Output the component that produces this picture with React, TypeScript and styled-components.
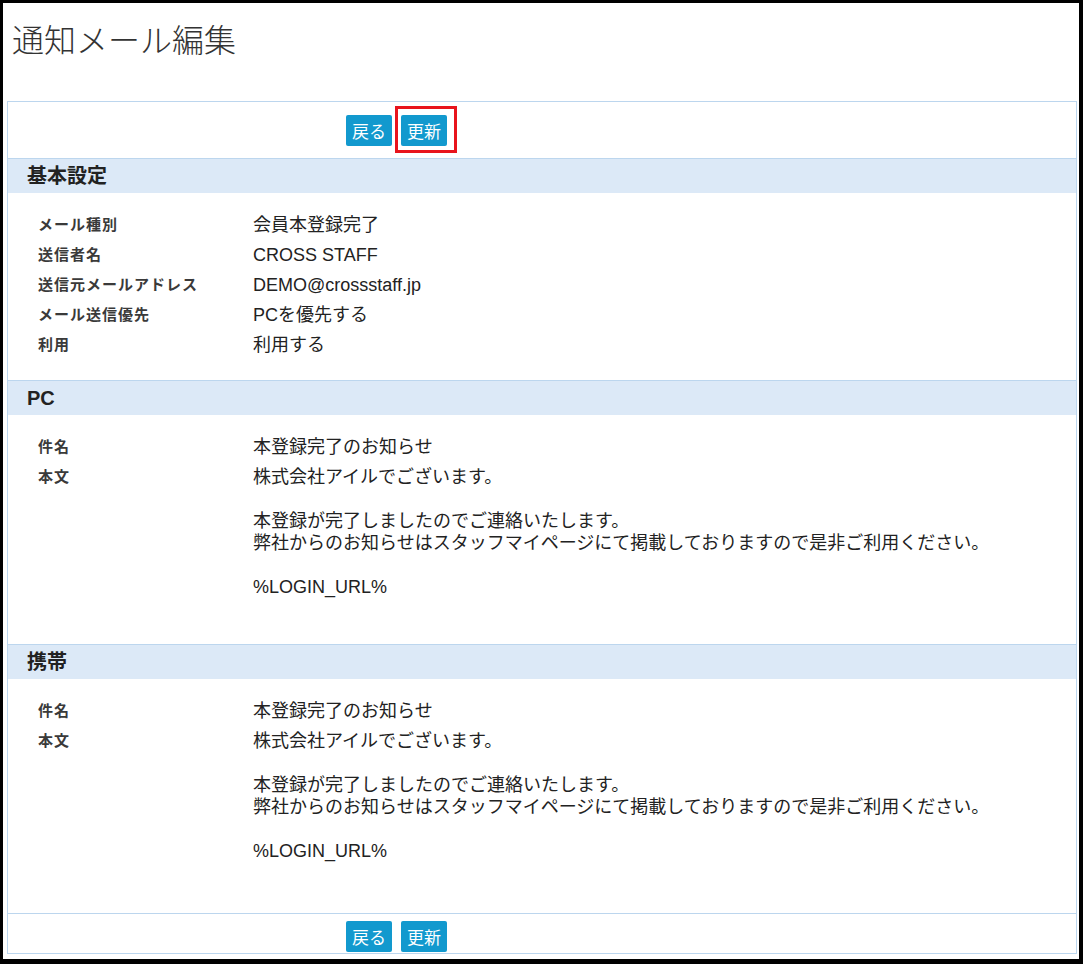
import React from 'react'
import styled, { createGlobalStyle } from 'styled-components'

const GlobalStyle = createGlobalStyle`
  html, body {
    margin: 0;
    padding: 0;
    background: #fff;
  }
  body {
    font-family: "Liberation Sans", "Noto Sans CJK JP", sans-serif;
    color: #222;
  }
`

const Frame = styled.div`
  box-sizing: border-box;
  width: 1083px;
  height: 964px;
  border-style: solid;
  border-color: #000;
  border-width: 3px 4px 5px 3px;
  padding: 0 2px 5px 4px;
  display: flex;
  flex-direction: column;
  background: #fff;
`

const Title = styled.h1`
  margin: 0 0 43px;
  padding: 15px 0 0 5px;
  font-size: 32px;
  line-height: 40px;
  font-weight: 300;
  color: #333;
  font-family: "Noto Sans CJK JP", sans-serif;
`

const Panel = styled.div`
  flex: 1;
  display: flex;
  flex-direction: column;
  border: 1px solid #bcd6ee;
`

const ButtonBar = styled.div<{ $top?: boolean }>`
  display: flex;
  gap: 9px;
  padding: ${p => (p.$top ? '13px 0 12px 338px' : '7px 0 1px 338px')};
  border-top: ${p => (p.$top ? 'none' : '1px solid #bcd6ee')};
`

const Button = styled.button<{ $marked?: boolean }>`
  position: relative;
  height: 31px;
  padding: 0 6px;
  border: none;
  border-radius: 2px;
  background: #1299ce;
  color: #fff;
  font-family: "Noto Sans CJK JP", sans-serif;
  font-size: 17px;
  line-height: 31px;
  cursor: pointer;

  ${p =>
    p.$marked &&
    `
    &::after {
      content: '';
      position: absolute;
      top: -9px;
      left: -6px;
      right: -10px;
      bottom: -7px;
      border: 3px solid #e8141c;
      pointer-events: none;
    }
  `}
`

const SectionHead = styled.h2`
  margin: 0;
  height: 34px;
  padding-left: 19px;
  border-top: 1px solid #bcd6ee;
  background: #dce9f7;
  font-size: 20px;
  line-height: 34px;
  font-weight: 700;
  color: #222;
`

const SectionBody = styled.div<{ $grow?: boolean }>`
  flex: ${p => (p.$grow ? 1 : 'none')};
  padding: 17px 0 20px 30px;
`

const Row = styled.div`
  display: grid;
  grid-template-columns: 215px 1fr;
  padding: 4px 0;
`

const Label = styled.div`
  font-size: 15px;
  line-height: 22px;
  letter-spacing: 1px;
  font-weight: 700;
  color: #3a3a3a;
`

const Value = styled.div`
  font-size: 18px;
  line-height: 22px;
  color: #222;
  white-space: pre-wrap;
`

const Buttons = ({ top }: { top?: boolean }) => (
  <ButtonBar $top={top}>
    <Button>戻る</Button>
    <Button $marked={top}>更新</Button>
  </ButtonBar>
)

const MailBody = () => (
  <Value>
    {'株式会社アイルでございます。\n\n本登録が完了しましたのでご連絡いたします。\n弊社からのお知らせはスタッフマイページにて掲載しておりますので是非ご利用ください。\n\n%LOGIN_URL%\n\u00a0'}
  </Value>
)

const basic: [string, string][] = [
  ['メール種別', '会員本登録完了'],
  ['送信者名', 'CROSS STAFF'],
  ['送信元メールアドレス', 'DEMO@crossstaff.jp'],
  ['メール送信優先', 'PCを優先する'],
  ['利用', '利用する'],
]

const App = () => {
  return (
    <>
      <GlobalStyle />
      <Frame>
        <Title>通知メール編集</Title>
        <Panel>
          <Buttons top />

          <SectionHead>基本設定</SectionHead>
          <SectionBody>
            {basic.map(([label, value]) => (
              <Row key={label}>
                <Label>{label}</Label>
                <Value>{value}</Value>
              </Row>
            ))}
          </SectionBody>

          <SectionHead>PC</SectionHead>
          <SectionBody>
            <Row>
              <Label>件名</Label>
              <Value>本登録完了のお知らせ</Value>
            </Row>
            <Row>
              <Label>本文</Label>
              <MailBody />
            </Row>
          </SectionBody>

          <SectionHead>携帯</SectionHead>
          <SectionBody $grow>
            <Row>
              <Label>件名</Label>
              <Value>本登録完了のお知らせ</Value>
            </Row>
            <Row>
              <Label>本文</Label>
              <MailBody />
            </Row>
          </SectionBody>

          <Buttons />
        </Panel>
      </Frame>
    </>
  )
}

export default App
